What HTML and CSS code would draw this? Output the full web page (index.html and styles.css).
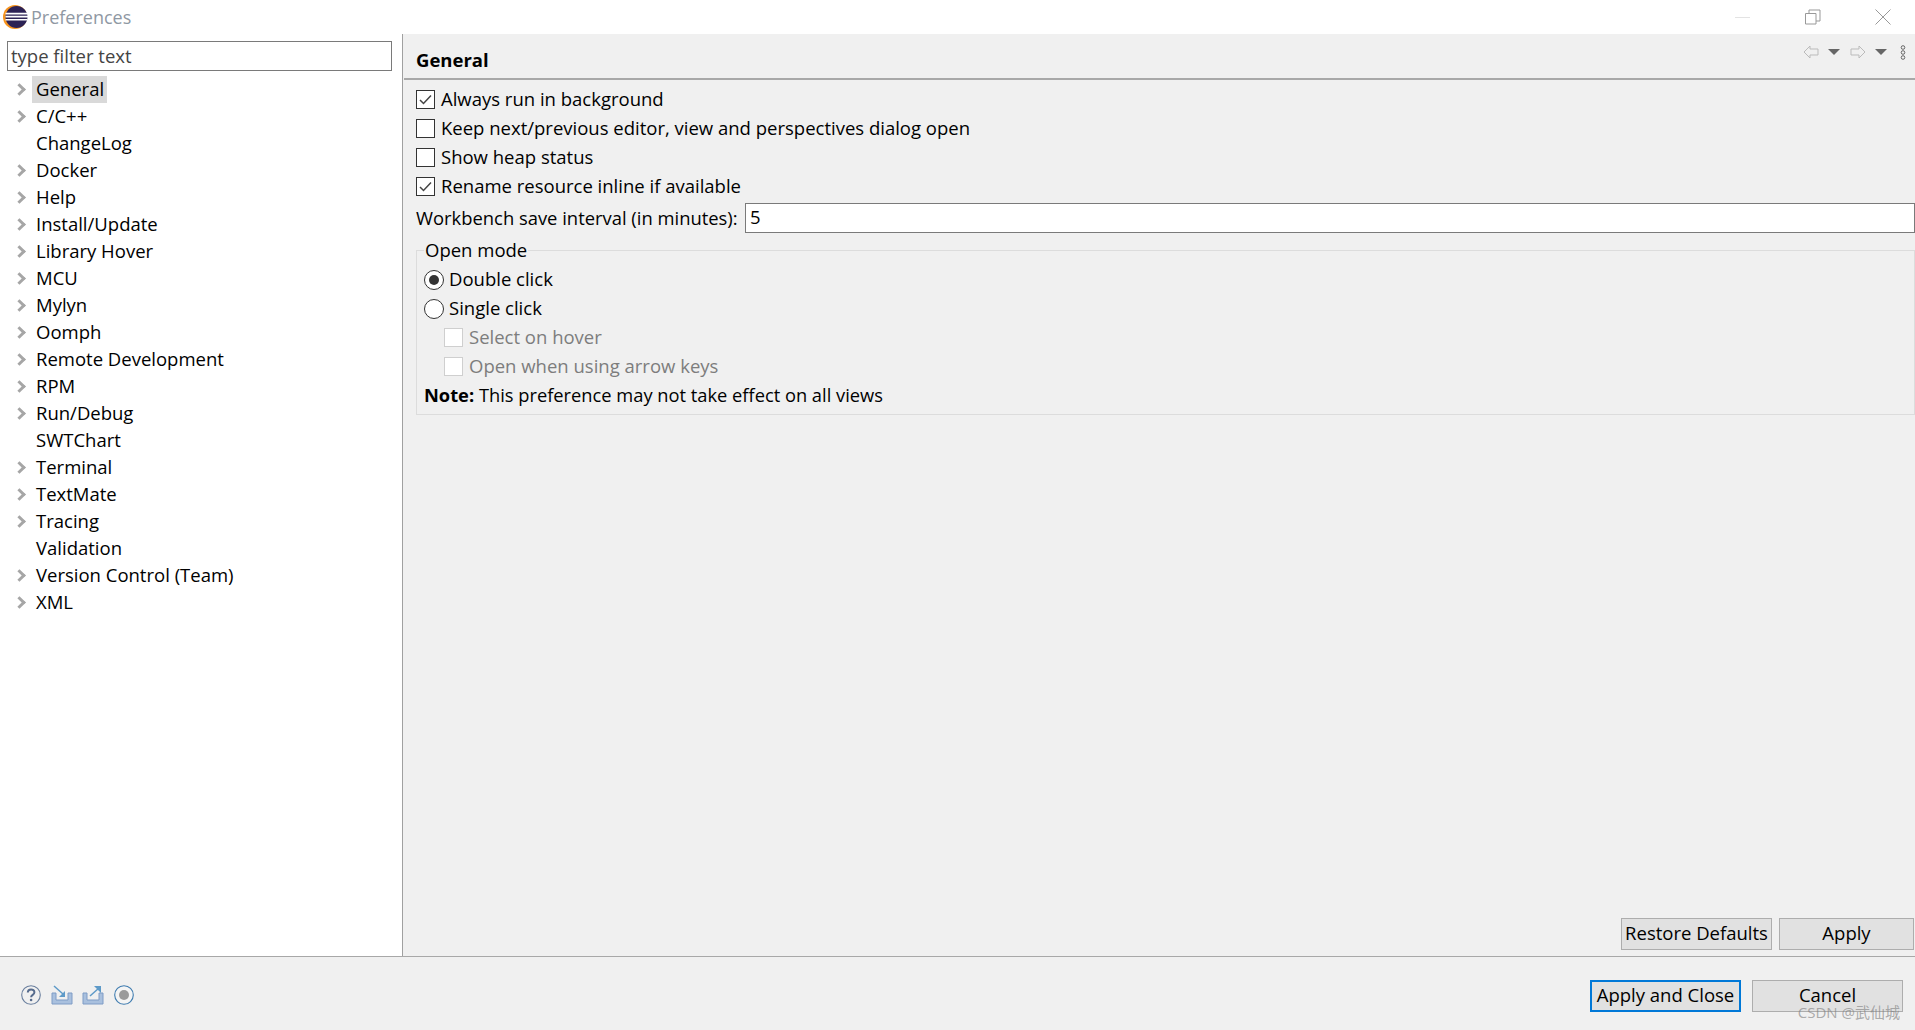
FILE: index.html
```html
<!DOCTYPE html>
<html lang="en">
<head>
    <meta charset="UTF-8">
    <meta name="viewport" content="width=device-width, initial-scale=1.0">
    <title>Preferences</title>
    <link rel="stylesheet" href="styles.css">
</head>
<body>

    <!-- Title bar -->
    <header class="titlebar">
        <svg class="app-logo" width="26" height="26" viewBox="0 0 26 26">
            <circle cx="13" cy="13" r="12" fill="#f7941e"/>
            <circle cx="14.5" cy="13" r="11" fill="#2c2255"/>
            <path d="M3.5 9.6h22M3.5 12.6h22.5M3.5 15.8h22" stroke="#fff" stroke-width="1.6"/>
        </svg>
        <span class="title-text">Preferences</span>
        <div class="window-controls">
            <svg class="win-min" width="16" height="16" viewBox="0 0 16 16"><path d="M0 8.5h15" stroke="#e3e3e3"/></svg>
            <svg class="win-max" width="16" height="16" viewBox="0 0 16 16" fill="none" stroke="#999"><path d="M0.5 4.5h10.5v10.5h-10.5zM4 4.5v-3.5h11v11h-4"/></svg>
            <svg class="win-close" width="16" height="16" viewBox="0 0 16 16" stroke="#999"><path d="M0.5 0.5l15 15M15.500 0.500l-15 15"/></svg>
        </div>
    </header>

    <div class="main">
        <!-- Left tree -->
        <aside class="sidebar">
            <div class="filter-box">type filter text</div>
            <ul class="tree">
                <li><span class="chevron"></span><span class="tree-label selected">General</span></li>
                <li><span class="chevron"></span><span class="tree-label">C/C++</span></li>
                <li><span class="no-chevron"></span><span class="tree-label">ChangeLog</span></li>
                <li><span class="chevron"></span><span class="tree-label">Docker</span></li>
                <li><span class="chevron"></span><span class="tree-label">Help</span></li>
                <li><span class="chevron"></span><span class="tree-label">Install/Update</span></li>
                <li><span class="chevron"></span><span class="tree-label">Library Hover</span></li>
                <li><span class="chevron"></span><span class="tree-label">MCU</span></li>
                <li><span class="chevron"></span><span class="tree-label">Mylyn</span></li>
                <li><span class="chevron"></span><span class="tree-label">Oomph</span></li>
                <li><span class="chevron"></span><span class="tree-label">Remote Development</span></li>
                <li><span class="chevron"></span><span class="tree-label">RPM</span></li>
                <li><span class="chevron"></span><span class="tree-label">Run/Debug</span></li>
                <li><span class="no-chevron"></span><span class="tree-label">SWTChart</span></li>
                <li><span class="chevron"></span><span class="tree-label">Terminal</span></li>
                <li><span class="chevron"></span><span class="tree-label">TextMate</span></li>
                <li><span class="chevron"></span><span class="tree-label">Tracing</span></li>
                <li><span class="no-chevron"></span><span class="tree-label">Validation</span></li>
                <li><span class="chevron"></span><span class="tree-label">Version Control (Team)</span></li>
                <li><span class="chevron"></span><span class="tree-label">XML</span></li>
            </ul>
        </aside>

        <!-- Right page -->
        <section class="page">
            <div class="page-header">
                <h1>General</h1>
                <div class="page-tools">
                    <svg width="16" height="14" viewBox="0 0 16 14" fill="none" stroke="#bbb"><path d="M7 1L1 7l6 6V10h8V4H7z"/></svg>
                    <span class="drop-arrow"></span>
                    <svg class="tool-forward" width="16" height="14" viewBox="0 0 16 14" fill="none" stroke="#bbb"><path d="M9 1l6 6-6 6V10H1V4h8z"/></svg>
                    <span class="drop-arrow"></span>
                    <svg class="tool-menu" width="6" height="15" viewBox="0 0 6 15" fill="none" stroke="#666"><circle cx="3" cy="2.500" r="1.800"/><circle cx="3" cy="7.500" r="1.800"/><circle cx="3" cy="12.500" r="1.800"/></svg>
                </div>
            </div>

            <div class="page-body">
                <div class="check-row"><span class="box"><svg width="17" height="17" viewBox="0 0 17 17" fill="none" stroke="#444" stroke-width="1.500"><path d="M3 9l3.500 3.500L14 4.500"/></svg></span>Always run in background</div>
                <div class="check-row"><span class="box"></span>Keep next/previous editor, view and perspectives dialog open</div>
                <div class="check-row"><span class="box"></span>Show heap status</div>
                <div class="check-row"><span class="box"><svg width="17" height="17" viewBox="0 0 17 17" fill="none" stroke="#444" stroke-width="1.500"><path d="M3 9l3.500 3.500L14 4.500"/></svg></span>Rename resource inline if available</div>

                <div class="interval-row">
                    <label>Workbench save interval (in minutes):</label>
                    <div class="interval-input">5</div>
                </div>

                <fieldset class="group">
                    <legend>Open mode</legend>
                    <div class="radio-row"><span class="radio checked"></span>Double click</div>
                    <div class="radio-row"><span class="radio"></span>Single click</div>
                    <div class="check-row sub disabled"><span class="box"></span>Select on hover</div>
                    <div class="check-row sub disabled"><span class="box"></span>Open when using arrow keys</div>
                    <div class="note"><b>Note:</b> This preference may not take effect on all views</div>
                </fieldset>
            </div>

            <div class="page-buttons">
                <div class="btn restore">Restore Defaults</div>
                <div class="btn apply">Apply</div>
            </div>
        </section>
    </div>

    <!-- Footer -->
    <footer class="footer">
        <div class="footer-icons">
            <svg width="20" height="20" viewBox="0 0 20 20">
                <circle cx="10" cy="10" r="9.300" fill="none" stroke="#6a7f9e" stroke-width="1.100"/>
                <path d="M6.800 7.600c0-4.200 6.600-4.200 6.600-0.300 0 2.700-3.300 2.500-3.300 5" fill="none" stroke="#566b8d" stroke-width="2"/>
                <circle cx="10.100" cy="15" r="1.300" fill="#566b8d"/>
            </svg>
            <svg class="icon-import" width="22" height="20" viewBox="0 0 22 20">
                <path d="M1 8h4v7h12V8h4v11H1z" fill="#a9c0de" stroke="#7f9cc6"/>
                <path d="M3 1l9 8" stroke="#5e9ac8" stroke-width="1.500"/>
                <path d="M14 12V6L8 12z" fill="#5e9ac8"/>
            </svg>
            <svg class="icon-export" width="22" height="20" viewBox="0 0 22 20">
                <path d="M1 8h4v7h12V8h4v11H1z" fill="#a9c0de" stroke="#7f9cc6"/>
                <path d="M8 11l9-8" stroke="#5e9ac8" stroke-width="1.500"/>
                <path d="M12 1h7v7z" fill="#5e9ac8"/>
            </svg>
            <svg class="icon-record" width="20" height="20" viewBox="0 0 20 20">
                <circle cx="10" cy="10" r="9.300" fill="#f4f4f4" stroke="#3f7cb0" stroke-width="1.100"/>
                <circle cx="10" cy="10" r="5" fill="#9a9a9a"/>
            </svg>
        </div>
        <div class="footer-buttons">
            <div class="btn default">Apply and Close</div>
            <div class="btn cancel">Cancel</div>
        </div>
    </footer>

    <div class="watermark">CSDN @武仙城</div>

</body>
</html>
```

FILE: styles.css
```css
/* General layout */
html {
    height: 1030px;
    overflow: hidden;
}

body {
    margin: 0;
    display: flex;
    flex-direction: column;
    height: 1030px;
    overflow: hidden;
    position: relative;
    background-color: #fff;
    font-family: "Open Sans", "Noto Sans CJK SC", sans-serif;
    font-size: 18.5px;
    color: #000;
}

/* Title bar */
.titlebar {
    height: 34px;
    flex: none;
    display: flex;
    align-items: center;
    padding-left: 2px;
    box-sizing: border-box;
}

.app-logo {
    margin-right: 3px;
}

.title-text {
    color: #8f98a3;
    font-size: 18px;
}

.window-controls {
    margin-left: auto;
    display: flex;
    align-items: center;
    padding-right: 24px;
}

.win-max {
    margin-left: 54px;
}

.win-close {
    margin-left: 54px;
}

.main {
    flex: 1;
    display: flex;
    min-height: 0;
    border-bottom: 1px solid #a8a8a8;
}

/* Left tree */
.sidebar {
    width: 402px;
    flex: none;
    box-sizing: border-box;
    padding: 7px 0 0 7px;
}

.filter-box {
    width: 385px;
    height: 30px;
    box-sizing: border-box;
    border: 1px solid #7a7a7a;
    padding-left: 3px;
    line-height: 28px;
    color: #444;
}

.tree {
    list-style: none;
    margin: 5px 0 0;
    padding: 0;
}

.tree li {
    height: 27px;
    display: flex;
    align-items: center;
}

.chevron {
    width: 9px;
    height: 9px;
    flex: none;
    margin-left: 8px;
    box-sizing: border-box;
    border-top: 3px solid #a6a6a6;
    border-right: 3px solid #a6a6a6;
    transform: rotate(45deg);
}

.no-chevron {
    width: 17px;
    flex: none;
}

.tree-label {
    margin-left: 8px;
    padding: 0 3px 2px 4px;
    line-height: 25px;
    color: #000;
}

.tree-label.selected {
    background-color: #d9d9d9;
}

/* Right page */
.page {
    flex: 1;
    min-width: 0;
    display: flex;
    flex-direction: column;
    background-color: #f0f0f0;
    border-left: 1px solid #a0a0a0;
}

.page-header {
    height: 46px;
    flex: none;
    box-sizing: border-box;
    border-bottom: 2px solid #a8a8a8;
    margin-left: 1px;
    display: flex;
    padding-left: 12px;
}

h1 {
    margin: 0;
    font-size: 18.5px;
    font-weight: 700;
    line-height: 26px;
    padding-top: 13px;
}

.page-tools {
    margin-left: auto;
    display: flex;
    align-items: center;
    height: 16px;
    margin-top: 10px;
    padding-right: 9px;
}

.drop-arrow {
    margin-left: 9px;
    border-left: 6px solid transparent;
    border-right: 6px solid transparent;
    border-top: 6px solid #666;
}

.tool-forward {
    margin-left: 10px;
}

.tool-menu {
    margin-left: 13px;
}

.page-body {
    padding: 5px 0 0 13px;
    flex: 1;
}

/* text sits low in its line box, the 2px bottom padding lifts it back up */
.check-row,
.radio-row {
    height: 29px;
    box-sizing: border-box;
    padding-bottom: 2px;
    display: flex;
    align-items: center;
    white-space: nowrap;
}

.box {
    width: 19px;
    height: 19px;
    flex: none;
    box-sizing: border-box;
    border: 1px solid #333;
    background-color: #fff;
    margin: 2px 6px 0 0;
    display: flex;
}

.interval-row {
    display: flex;
    align-items: center;
    height: 30px;
    margin-top: 2px;
}

.interval-row label {
    width: 329px;
    flex: none;
    font-size: 18.4px;
    padding-bottom: 2px;
}

.interval-input {
    flex: 1;
    height: 30px;
    box-sizing: border-box;
    border: 1px solid #7a7a7a;
    background-color: #fff;
    padding-left: 4px;
    line-height: 26px;
}

/* Open mode group */
.group {
    margin: 7px 0 0;
    padding: 5px 0 0 7px;
    border: 1px solid #dcdcdc;
    height: 175px;
    box-sizing: border-box;
}

.group legend {
    padding: 0 1px;
    line-height: 20px;
}

.radio {
    width: 20px;
    height: 20px;
    flex: none;
    box-sizing: border-box;
    border: 1px solid #333;
    border-radius: 50%;
    background-color: #fff;
    margin: 2px 5px 0 0;
    display: flex;
    align-items: center;
    justify-content: center;
}

.radio.checked::before {
    content: "";
    width: 10px;
    height: 10px;
    border-radius: 50%;
    background-color: #333;
}

.check-row.sub {
    margin-left: 20px;
}

.disabled {
    color: #7d7d7d;
}

.disabled .box {
    border-color: #cfcfcf;
}

.note {
    height: 29px;
    line-height: 27px;
    font-size: 18.3px;
}

/* Buttons */
.btn {
    height: 32px;
    box-sizing: border-box;
    border: 1px solid #adadad;
    background-color: #e1e1e1;
    padding-bottom: 4px;
    display: flex;
    align-items: center;
    justify-content: center;
    white-space: nowrap;
}

.page-buttons {
    display: flex;
    justify-content: flex-end;
    gap: 7px;
    padding: 0 1px 6px 0;
}

.restore,
.default,
.cancel {
    width: 151px;
}

.apply {
    width: 135px;
}

.footer {
    height: 73px;
    flex: none;
    display: flex;
    justify-content: space-between;
    background-color: #f0f0f0;
    box-sizing: border-box;
}

.footer-icons {
    display: flex;
    align-items: center;
    padding: 28px 0 0 21px;
    height: 20px;
}

.icon-import {
    margin-left: 10px;
}

.icon-export {
    margin-left: 9px;
}

.icon-record {
    margin-left: 10px;
}

.footer-buttons {
    display: flex;
    gap: 11px;
    padding: 23px 12px 0 0;
}

.btn.default {
    border: 2px solid #0078d7;
}

/* Site watermark over the corner */
.watermark {
    position: absolute;
    right: 15px;
    bottom: 8px;
    font-size: 15px;
    color: rgba(130, 130, 130, 0.65);
}
```
